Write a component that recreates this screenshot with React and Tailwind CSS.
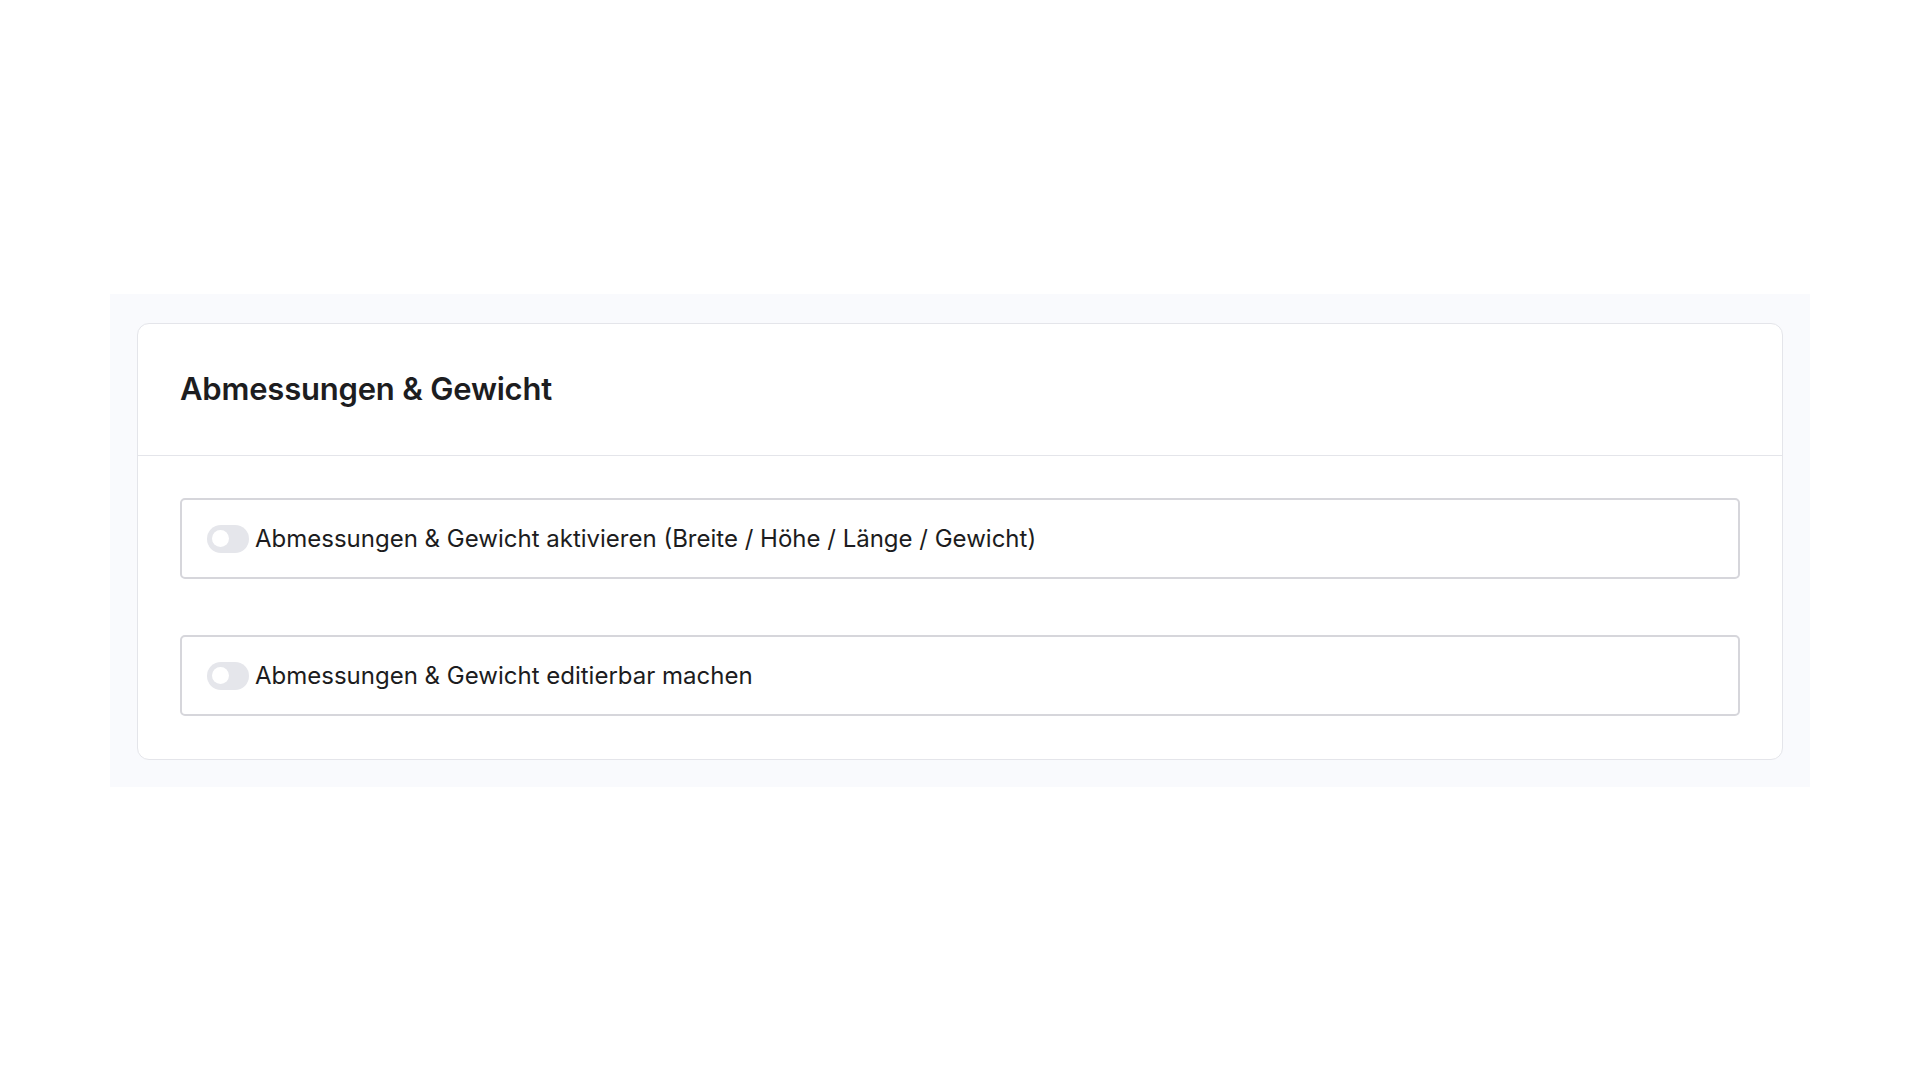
export default function App() {
  const rows = [
    "Abmessungen & Gewicht aktivieren (Breite / Höhe / Länge / Gewicht)",
    "Abmessungen & Gewicht editierbar machen",
  ];

  return (
    <div className="min-h-screen bg-white pt-[294px] px-[110px] font-['Inter',sans-serif]">
      {/* Section wrapper */}
      <div className="bg-[#f9fafd] pt-[29px] px-[27px] pb-[27px]">
        <div className="bg-white border border-[#e4e5ea] rounded-[12px]">
          <div className="h-[132px] flex items-center px-[42px] border-b border-[#e4e5ea]">
            <h2 className="text-[31px] font-semibold text-[#1d1d1f] tracking-[-0.2px]">
              Abmessungen &amp; Gewicht
            </h2>
          </div>
          <div className="pt-[42px] px-[42px] pb-[43px] flex flex-col gap-[56px]">
            {rows.map((label, idx) => (
              <label
                key={idx}
                className="h-[81px] flex items-center gap-[6px] px-[25px] border-2 border-[#d6d6db] rounded-[5px]"
              >
                <span className="w-[42px] h-[28px] rounded-full bg-[#e5e6eb] flex items-center px-[5px]">
                  <span className="w-[17px] h-[17px] rounded-full bg-white" />
                </span>
                <span className="text-[24px] text-[#1c1c20]">{label}</span>
              </label>
            ))}
          </div>
        </div>
      </div>
    </div>
  );
}
